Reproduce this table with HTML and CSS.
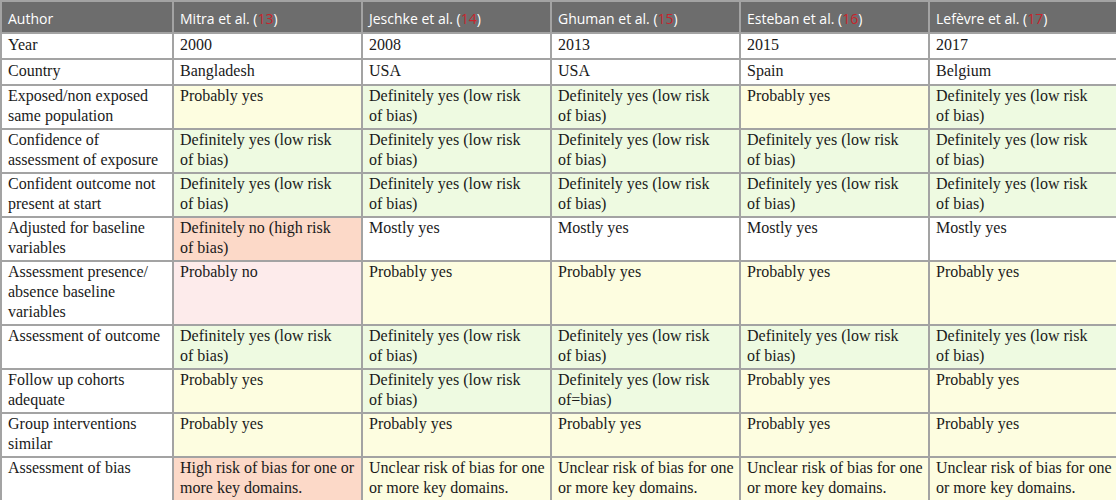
FILE: index.html
```html
<!DOCTYPE html>
<html>
<head>
<meta charset="utf-8">
<link rel="stylesheet" href="styles.css">
</head>
<body>
<table class="bias">
  <colgroup>
    <col class="c-label">
    <col class="c-study">
    <col class="c-study">
    <col class="c-study">
    <col class="c-study">
    <col class="c-last">
  </colgroup>
  <thead>
    <tr>
      <th>Author</th>
      <th>Mitra et al. (<span class="ref">13</span>)</th>
      <th>Jeschke et al. (<span class="ref">14</span>)</th>
      <th>Ghuman et al. (<span class="ref">15</span>)</th>
      <th>Esteban et al. (<span class="ref">16</span>)</th>
      <th>Lefèvre et al. (<span class="ref">17</span>)</th>
    </tr>
  </thead>
  <tbody>
    <tr class="one">
      <td>Year</td><td>2000</td><td>2008</td><td>2013</td><td>2015</td><td>2017</td>
    </tr>
    <tr class="one">
      <td>Country</td><td>Bangladesh</td><td>USA</td><td>USA</td><td>Spain</td><td>Belgium</td>
    </tr>
    <tr>
      <td>Exposed/non exposed<br>same population</td>
      <td class="y">Probably yes</td>
      <td class="g">Definitely yes (low risk<br>of bias)</td>
      <td class="g">Definitely yes (low risk<br>of bias)</td>
      <td class="y">Probably yes</td>
      <td class="g">Definitely yes (low risk<br>of bias)</td>
    </tr>
    <tr>
      <td>Confidence of<br>assessment of exposure</td>
      <td class="g">Definitely yes (low risk<br>of bias)</td>
      <td class="g">Definitely yes (low risk<br>of bias)</td>
      <td class="g">Definitely yes (low risk<br>of bias)</td>
      <td class="g">Definitely yes (low risk<br>of bias)</td>
      <td class="g">Definitely yes (low risk<br>of bias)</td>
    </tr>
    <tr>
      <td>Confident outcome not<br>present at start</td>
      <td class="g">Definitely yes (low risk<br>of bias)</td>
      <td class="g">Definitely yes (low risk<br>of bias)</td>
      <td class="g">Definitely yes (low risk<br>of bias)</td>
      <td class="g">Definitely yes (low risk<br>of bias)</td>
      <td class="g">Definitely yes (low risk<br>of bias)</td>
    </tr>
    <tr>
      <td>Adjusted for baseline<br>variables</td>
      <td class="o">Definitely no (high risk<br>of bias)</td>
      <td>Mostly yes</td>
      <td>Mostly yes</td>
      <td>Mostly yes</td>
      <td>Mostly yes</td>
    </tr>
    <tr>
      <td>Assessment presence/<br>absence baseline<br>variables</td>
      <td class="p">Probably no</td>
      <td class="y">Probably yes</td>
      <td class="y">Probably yes</td>
      <td class="y">Probably yes</td>
      <td class="y">Probably yes</td>
    </tr>
    <tr>
      <td>Assessment of outcome</td>
      <td class="g">Definitely yes (low risk<br>of bias)</td>
      <td class="g">Definitely yes (low risk<br>of bias)</td>
      <td class="g">Definitely yes (low risk<br>of bias)</td>
      <td class="g">Definitely yes (low risk<br>of bias)</td>
      <td class="g">Definitely yes (low risk<br>of bias)</td>
    </tr>
    <tr>
      <td>Follow up cohorts<br>adequate</td>
      <td class="y">Probably yes</td>
      <td class="g">Definitely yes (low risk<br>of bias)</td>
      <td class="g">Definitely yes (low risk<br>of=bias)</td>
      <td class="y">Probably yes</td>
      <td class="y">Probably yes</td>
    </tr>
    <tr>
      <td>Group interventions<br>similar</td>
      <td class="y">Probably yes</td>
      <td class="y">Probably yes</td>
      <td class="y">Probably yes</td>
      <td class="y">Probably yes</td>
      <td class="y">Probably yes</td>
    </tr>
    <tr>
      <td>Assessment of bias</td>
      <td class="o">High risk of bias for one or<br>more key domains.</td>
      <td class="y">Unclear risk of bias for one<br>or more key domains.</td>
      <td class="y">Unclear risk of bias for one<br>or more key domains.</td>
      <td class="y">Unclear risk of bias for one<br>or more key domains.</td>
      <td class="y">Unclear risk of bias for one<br>or more key domains.</td>
    </tr>
  </tbody>
</table>
</body>
</html>
```

FILE: styles.css
```css
html, body {
  margin: 0;
  padding: 0;
  background: #ffffff;
}

.bias {
  width: 1116px;
  table-layout: fixed;
  border-collapse: collapse;
  font-family: "Liberation Serif", "Times New Roman", serif;
  font-size: 16px;
  color: #1a1a1a;
}

.c-label { width: 172px; }
.c-study { width: 189px; }
.c-last { width: 188px; }

.bias th,
.bias td {
  border: 2px solid #a3a3a3;
  padding: 0 6px 2px 6px;
  line-height: 20px;
  text-align: left;
  vertical-align: top;
  white-space: nowrap;
  overflow: hidden;
}

.bias th {
  background: #6d6d6d;
  color: #ffffff;
  font-family: "Open Sans", "Noto Sans", sans-serif;
  font-weight: normal;
  font-size: 14px;
  height: 26px;
  padding-top: 4px;
  padding-bottom: 0;
  vertical-align: middle;
}

.bias .one td {
  padding-top: 1px;
  padding-bottom: 3px;
}

.ref { color: #c8242c; }

.bias td.y { background: #fdfde0; }
.bias td.g { background: #eefae1; }
.bias td.o { background: #fcd9c8; }
.bias td.p { background: #fdebeb; }
```
